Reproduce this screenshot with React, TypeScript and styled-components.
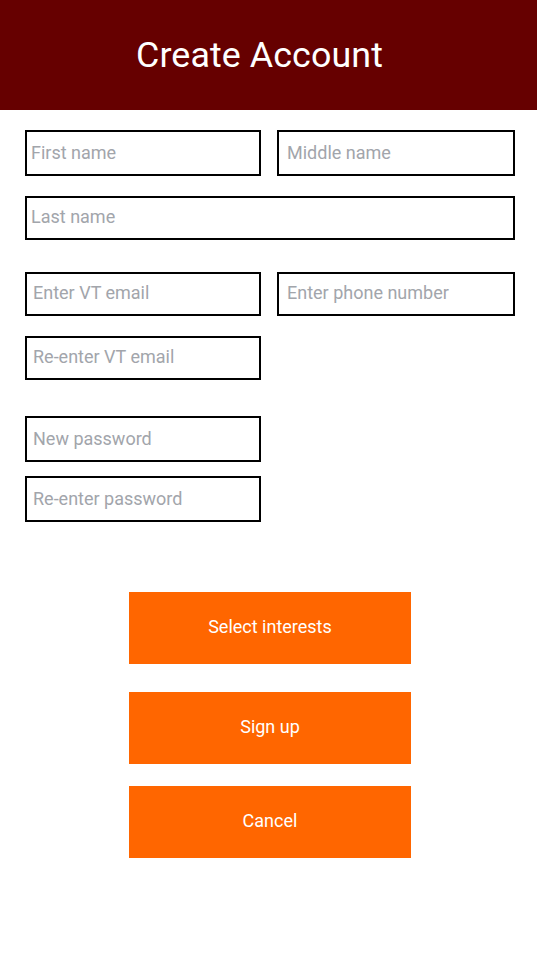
import React from "react";
import styled, { createGlobalStyle } from "styled-components";

const Global = createGlobalStyle`
  html, body { margin: 0; padding: 0; background: #ffffff; }
  body { font-family: Roboto, "Noto Sans", Arial, sans-serif; }
  * { box-sizing: border-box; }
`;

const Page = styled.div`
  width: 537px;
  min-height: 956px;
  background: #ffffff;
  display: flex;
  flex-direction: column;
`;

const Header = styled.header`
  height: 110px;
  background: #660000;
  display: flex;
  align-items: center;
  justify-content: center;
  padding-right: 18px;
`;

const Title = styled.h1`
  margin: 0;
  font-family: Roboto, Arial, sans-serif;
  font-weight: 400;
  font-size: 35.8px;
  color: #ffffff;
  letter-spacing: 0.1px;
`;

const Form = styled.form`
  display: flex;
  flex-direction: column;
  padding: 20px 22px 0 25px;
`;

const Row = styled.div<{ $mt?: number }>`
  display: flex;
  gap: 16px;
  margin-top: ${(p) => p.$mt ?? 0}px;
`;

const Field = styled.input<{ $w: number; $h: number; $pl: number }>`
  width: ${(p) => p.$w}px;
  height: ${(p) => p.$h}px;
  border: 2px solid #000000;
  border-radius: 0;
  padding: 0 4px ${(p) => (p.$h > 45 ? 1 : 3)}px ${(p) => p.$pl}px;
  font-family: Roboto, Arial, sans-serif;
  font-size: 18px;
  color: #222;
  background: #ffffff;
  outline: none;
  &::placeholder {
    color: #a2a5ab;
  }
`;

const Actions = styled.div`
  display: flex;
  flex-direction: column;
  align-items: center;
  padding: 70px 0 0 3px;
`;

const ActionButton = styled.button<{ $mt?: number }>`
  width: 282px;
  height: 72px;
  margin-top: ${(p) => p.$mt ?? 0}px;
  padding: 0 0 4px;
  border: none;
  border-radius: 0;
  background: #ff6600;
  color: #ffffff;
  font-family: Roboto, Arial, sans-serif;
  font-size: 18px;
  font-weight: 400;
  cursor: pointer;
`;

export default function App() {
  return (
    <>
      <Global />
      <Page>
        <Header>
          <Title>Create Account</Title>
        </Header>
        <Form onSubmit={(e) => e.preventDefault()}>
          <Row>
            <Field $w={236} $h={46} $pl={4} placeholder="First name" />
            <Field $w={238} $h={46} $pl={8} placeholder="Middle name" />
          </Row>
          <Row $mt={20}>
            <Field $w={490} $h={44} $pl={4} placeholder="Last name" />
          </Row>
          <Row $mt={32}>
            <Field $w={236} $h={44} $pl={6} placeholder="Enter VT email" />
            <Field $w={238} $h={44} $pl={8} placeholder="Enter phone number" />
          </Row>
          <Row $mt={20}>
            <Field $w={236} $h={44} $pl={6} placeholder="Re-enter VT email" />
          </Row>
          <Row $mt={36}>
            <Field $w={236} $h={46} $pl={6} type="password" placeholder="New password" />
          </Row>
          <Row $mt={14}>
            <Field $w={236} $h={46} $pl={6} type="password" placeholder="Re-enter password" />
          </Row>
        </Form>
        <Actions>
          <ActionButton type="button">Select interests</ActionButton>
          <ActionButton type="button" $mt={28}>Sign up</ActionButton>
          <ActionButton type="button" $mt={22}>Cancel</ActionButton>
        </Actions>
      </Page>
    </>
  );
}
